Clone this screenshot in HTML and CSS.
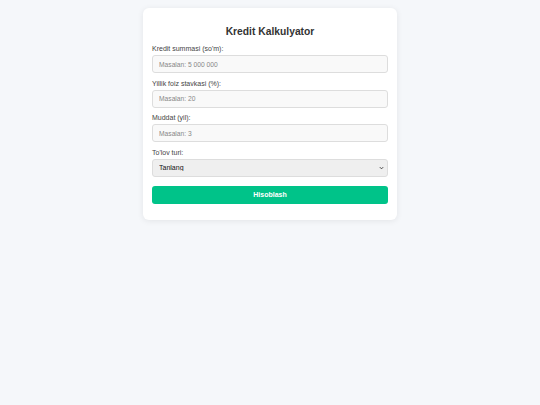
FILE: index.html
```html
<!DOCTYPE html>
<html lang="uz">
  <head>
    <meta charset="UTF-8" />
    <meta name="viewport" content="width=device-width, initial-scale=1.0" />
    <title>Kredit Kalkulyator</title>
    <link rel="stylesheet" href="styles.css">
  </head>
  <body>
    <div class="container">
      <h2>Kredit Kalkulyator</h2>

      <div class="field">
        <label for="amount">Kredit summasi (so'm):</label>
        <input type="text" id="amount" placeholder="Masalan: 5 000 000" />
      </div>

      <div class="field">
        <label for="rate">Yillik foiz stavkasi (%):</label>
        <input type="text" id="rate" placeholder="Masalan: 20" />
      </div>

      <div class="field">
        <label for="term">Muddat (yil):</label>
        <input type="text" id="term" placeholder="Masalan: 3" />
      </div>

      <div class="field">
        <label for="type">To'lov turi:</label>
        <select id="type">
          <option value="">Tanlang</option>
          <option value="annuitet">Annuitet</option>
          <option value="differensial">Differensial</option>
        </select>
      </div>

      <button id="calcButton">Hisoblash</button>
    </div>
  </body>
</html>
```

FILE: styles.css
```css
body {
  font-family: 'Liberation Sans', Arial, sans-serif;
  margin: 0;
  padding: 8px 0;
  background-color: #f5f7fa;
}

.container {
  width: 254px;
  box-sizing: border-box;
  margin: 0 auto;
  background-color: white;
  border-radius: 6px;
  box-shadow: 0 1px 6px rgba(0, 0, 0, 0.08);
  padding: 9px 9px 16px;
}

h2 {
  color: #333;
  text-align: center;
  font-size: 10.3px;
  line-height: 14px;
  margin: 8px 0 5px;
}

.field {
  margin-bottom: 5.6px;
}

label {
  display: block;
  font-size: 7px;
  line-height: 9px;
  margin-bottom: 2px;
  color: #444;
}

input,
select {
  display: block;
  width: 100%;
  height: 18px;
  box-sizing: border-box;
  padding: 0 6px;
  border: 1px solid #ddd;
  border-radius: 3px;
  font-family: inherit;
  font-size: 6.7px;
  background-color: #f9f9f9;
  color: #333;
}

input::placeholder {
  color: #888;
}

select {
  appearance: none;
  -webkit-appearance: none;
  background-color: #efefef;
  background-image: url("data:image/svg+xml,%3Csvg xmlns='http://www.w3.org/2000/svg' width='6' height='4' viewBox='0 0 6 4'%3E%3Cpath d='M1 1l2 2 2-2' fill='none' stroke='%23333' stroke-width='1.1'/%3E%3C/svg%3E");
  background-repeat: no-repeat;
  background-position: right 3px center;
  background-size: 5px 4px;
  color: #111;
  font-size: 7px;
}

button {
  display: block;
  width: 100%;
  height: 18px;
  margin-top: 9px;
  background-color: #00c389;
  color: white;
  border: none;
  border-radius: 3px;
  font-family: inherit;
  font-size: 7px;
  font-weight: bold;
  cursor: pointer;
}

button:hover {
  background-color: #00ad79;
}
```
